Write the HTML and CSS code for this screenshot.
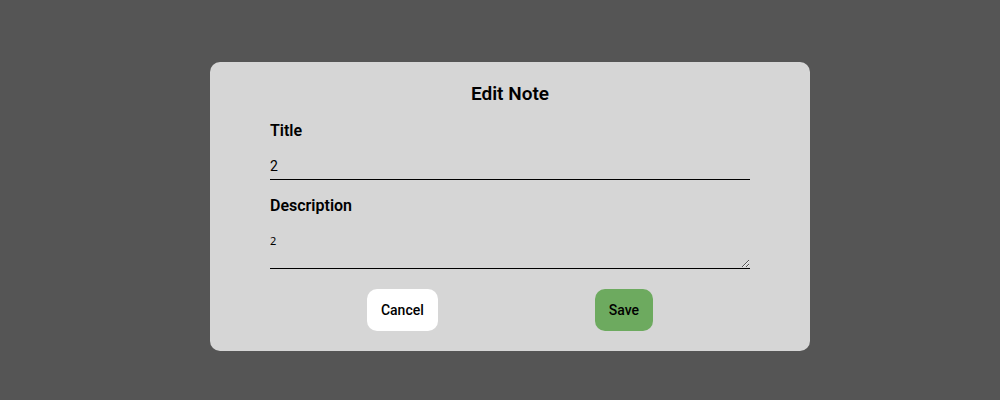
FILE: index.html
```html
<!DOCTYPE html>
<html lang="en">
<head>
<meta charset="utf-8">
<meta name="viewport" content="width=device-width, initial-scale=1">
<title>Edit Note</title>
<link rel="stylesheet" href="styles.css">
</head>
<body>
<main class="overlay">
  <form class="modal">
    <h1 class="modal-title">Edit Note</h1>
    <label class="label" for="title">Title</label>
    <input class="field field-title" id="title" type="text" value="2">
    <label class="label" for="description">Description</label>
    <textarea class="field field-description" id="description">2</textarea>
    <div class="actions">
      <button class="button button-cancel" type="button">Cancel</button>
      <button class="button button-save" type="button">Save</button>
    </div>
  </form>
</main>
</body>
</html>
```

FILE: styles.css
```css
* {
  box-sizing: border-box;
}

body {
  margin: 0;
  background: #555;
  color: #000;
  font-family: Roboto, sans-serif;
}

.overlay {
  display: flex;
  justify-content: center;
  padding: 62px 0 40px 20px;
}

.modal {
  display: flex;
  flex-direction: column;
  width: 100%;
  max-width: 600px;
  padding: 20px 60px;
  border-radius: 10px;
  background: #d6d6d6;
}

.modal-title {
  margin: 0 0 15px;
  font-size: 19px;
  font-weight: 600;
  line-height: 24px;
  text-align: center;
}

.label {
  font-size: 16px;
  font-weight: 600;
  line-height: 20px;
}

.field {
  display: block;
  width: 100%;
  border: 0;
  border-bottom: 1px solid #000;
  border-radius: 0;
  background: transparent;
  color: #000;
  outline: none;
}

.field-title {
  height: 30px;
  margin: 9px 0 16px;
  padding: 4px 0 2px;
  font: 14px Roboto, sans-serif;
}

.field-description {
  height: 39px;
  margin: 14px 0 20px;
  padding: 3px 0 4px;
  font: 11px/15px "Noto Sans", sans-serif;
  resize: both;
  overflow: auto;
}

.actions {
  display: flex;
  justify-content: center;
  gap: 157px;
}

.button {
  height: 42px;
  padding: 0 14px;
  border: 0;
  border-radius: 10px;
  color: #000;
  font: 500 14px Roboto, sans-serif;
}

.button-cancel {
  background: #fff;
}

.button-save {
  background: #6daa5f;
}
```
